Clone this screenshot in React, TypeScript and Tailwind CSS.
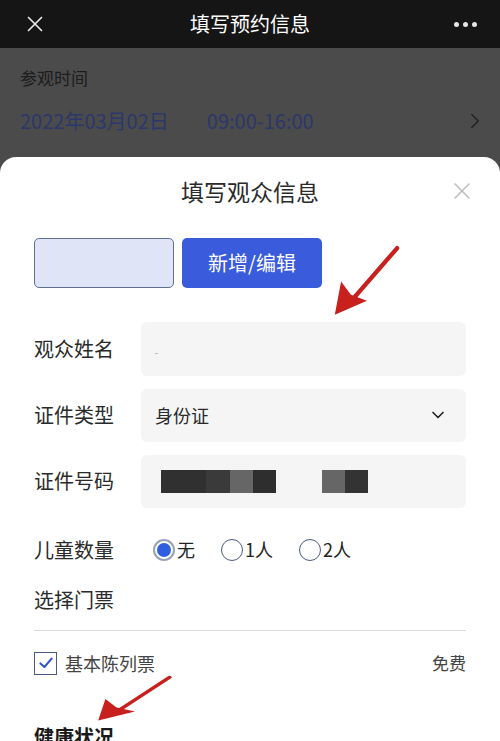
import { ChevronDown, ChevronRight, X } from "lucide-react";

const font = { fontFamily: '"Noto Sans CJK SC", "Noto Sans", sans-serif' };

function Arrow({ className }: { className: string }) {
  return (
    <svg className={className} viewBox="0 0 100 100" fill="none" preserveAspectRatio="none">
      <line x1="93" y1="7" x2="24" y2="82" stroke="#c8201c" strokeWidth="6" strokeLinecap="round" />
      <path d="M4 97 L13 52 L27 70 L50 78 Z" fill="#c8201c" />
    </svg>
  );
}

function Radio({ checked, label }: { checked?: boolean; label: string }) {
  return (
    <div className="flex items-center gap-[2px]">
      {checked ? (
        <span className="flex h-[22px] w-[22px] items-center justify-center rounded-full border-2 border-[#9aa3b5]">
          <span className="h-[14px] w-[14px] rounded-full bg-[#2f5fe0]" />
        </span>
      ) : (
        <span className="h-[22px] w-[22px] rounded-full border-[1.5px] border-[#4c5a7c]" />
      )}
      <span className="text-[18px] text-[#222]">{label}</span>
    </div>
  );
}

export default function App() {
  return (
    <div className="relative h-[741px] w-[500px] overflow-hidden bg-[#4b4b4b]" style={font}>
      <div className="flex h-[48px] items-center justify-between bg-[#151515] px-[22px]">
        <div className="w-[60px]">
          <X size={26} strokeWidth={1.6} className="text-[#e5e5e5]" />
        </div>
        <span className="text-[20px] text-white">填写预约信息</span>
        <div className="flex w-[60px] justify-end gap-[4px] pr-[1px]">
          <span className="h-[5px] w-[5px] rounded-full bg-[#e5e5e5]" />
          <span className="h-[5px] w-[5px] rounded-full bg-[#e5e5e5]" />
          <span className="h-[5px] w-[5px] rounded-full bg-[#e5e5e5]" />
        </div>
      </div>

      <div className="px-[20px] pt-[17px]">
        <div className="text-[17px] text-[#1c1c1c]">参观时间</div>
        <div className="mt-[15px] flex items-center justify-between pb-[21px]">
          <div className="flex gap-[38px] text-[20px] text-[#2c376a]">
            <span>2022年03月02日</span>
            <span>09:00-16:00</span>
          </div>
          <ChevronRight size={26} strokeWidth={1.4} className="mr-[-8px] text-[#222]" />
        </div>
      </div>

      <div className="rounded-t-[16px] bg-white px-[34px] pb-6">
        <div className="relative flex h-[68px] items-center justify-center">
          <span className="pt-[2px] text-[23px] text-[#2a2a2a]">填写观众信息</span>
          <X size={28} strokeWidth={1.3} className="absolute right-[-10px] top-[20px] text-[#bdbdbd]" />
        </div>

        <div className="mt-[13px] flex gap-[8px]">
          <div className="h-[50px] w-[140px] rounded-[5px] border border-[#607090] bg-[#dfe4f6]" />
          <div className="flex h-[50px] w-[140px] items-center justify-center rounded-[5px] bg-[#3a5bdb] text-[20px] text-white">
            新增/编辑
          </div>
        </div>

        <div className="mt-[34px] flex flex-col gap-[13px]">
          <div className="flex items-center">
            <span className="w-[107px] text-[20px] text-[#2a2a2a]">观众姓名</span>
            <div className="flex h-[54px] flex-1 items-center rounded-[6px] bg-[#f5f5f5] px-[14px]">
              <span className="mt-[10px] h-[1px] w-[3px] bg-[#bbb]" />
            </div>
          </div>
          <div className="flex items-center">
            <span className="w-[107px] text-[20px] text-[#2a2a2a]">证件类型</span>
            <div className="flex h-[53px] flex-1 items-center justify-between rounded-[6px] bg-[#f5f5f5] pl-[14px] pr-[18px]">
              <span className="text-[18px] text-[#2a2a2a]">身份证</span>
              <ChevronDown size={20} strokeWidth={2} className="text-[#222]" />
            </div>
          </div>
          <div className="flex items-center">
            <span className="w-[107px] text-[20px] text-[#2a2a2a]">证件号码</span>
            <div className="flex h-[53px] flex-1 items-center rounded-[6px] bg-[#f5f5f5] pl-[20px]">
              <div className="flex h-[23px]">
                <span className="w-[45px] bg-[#303030]" />
                <span className="w-[24px] bg-[#3a3a3a]" />
                <span className="w-[23px] bg-[#666]" />
                <span className="w-[23px] bg-[#2e2e2e]" />
                <span className="w-[46px]" />
                <span className="w-[23px] bg-[#666]" />
                <span className="w-[23px] bg-[#333]" />
              </div>
            </div>
          </div>
        </div>

        <div className="mt-[27px] flex items-center">
          <span className="w-[119px] text-[20px] text-[#2a2a2a]">儿童数量</span>
          <div className="flex gap-[26px]">
            <Radio checked label="无" />
            <Radio label="1人" />
            <Radio label="2人" />
          </div>
        </div>

        <div className="mt-[20px] text-[20px] text-[#2a2a2a]">选择门票</div>
        <div className="mt-[15px] h-px bg-[#dcdcdc]" />

        <div className="mt-[19px] flex items-center justify-between">
          <div className="flex items-center gap-[8px]">
            <span className="flex h-[23px] w-[23px] items-center justify-center border-[1.5px] border-[#4c5a80]">
              <svg viewBox="0 0 20 20" className="h-[16px] w-[16px]">
                <path d="M3 10.5 L8 15 L17 4.5" fill="none" stroke="#3056c8" strokeWidth="2.6" strokeLinecap="round" strokeLinejoin="round" />
              </svg>
            </span>
            <span className="text-[18px] text-[#444]">基本陈列票</span>
          </div>
          <span className="text-[17px] text-[#444]">免费</span>
        </div>

        <div className="mt-[45px] text-[20px] font-bold text-[#1a1a1a]">健康状况</div>
      </div>

      <Arrow className="absolute left-[332px] top-[243px] h-[74px] w-[70px]" />
      <Arrow className="absolute left-[95px] top-[674px] h-[48px] w-[80px]" />
    </div>
  );
}
